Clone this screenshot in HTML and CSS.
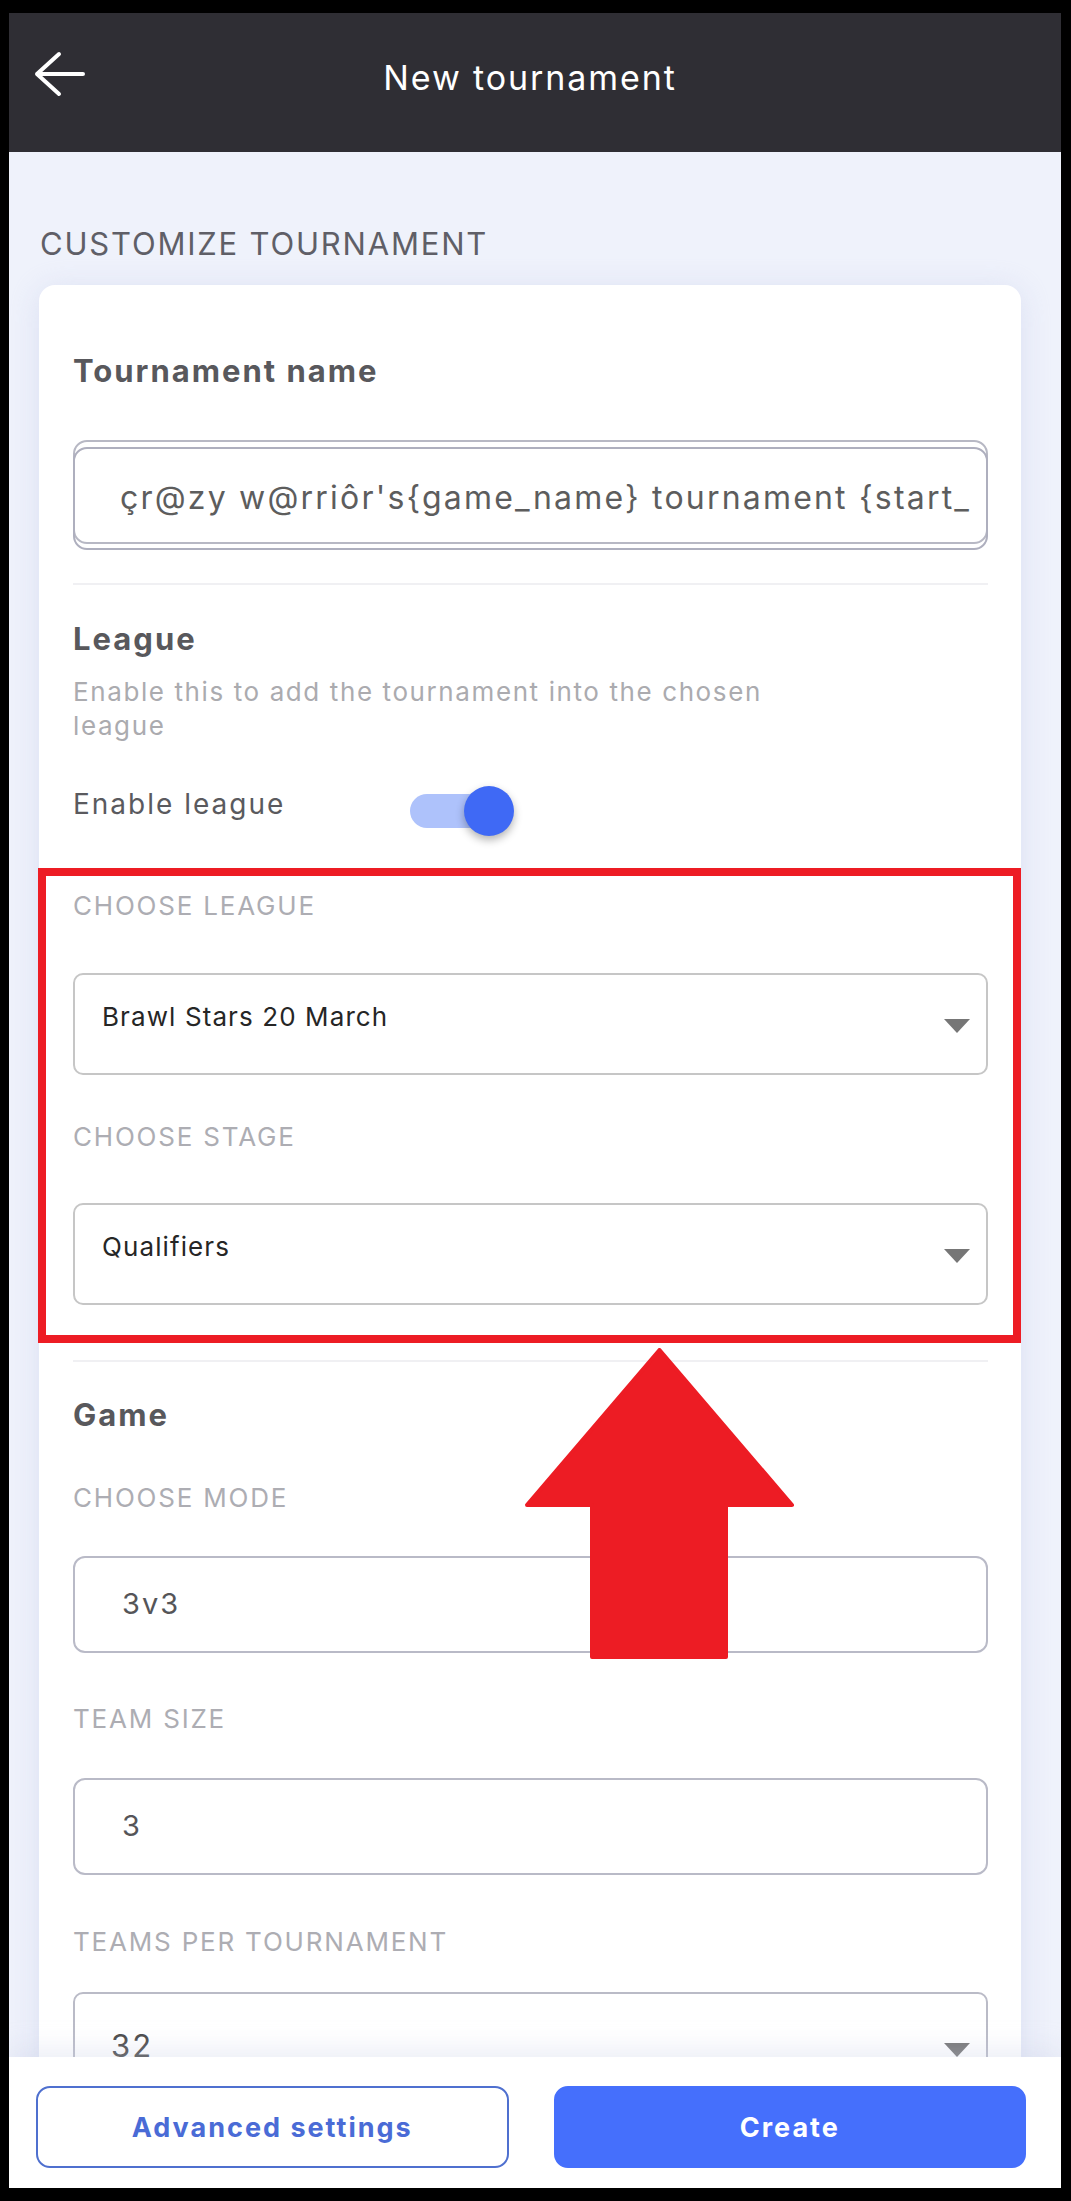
FILE: index.html
```html
<!DOCTYPE html>
<html lang="en">
<head>
<meta charset="utf-8">
<title>New tournament</title>
<link rel="stylesheet" href="styles.css">
</head>
<body>
<div class="phone">
  <header class="topbar">
    <svg class="back" width="54" height="48" viewBox="0 0 54 48" aria-hidden="true">
      <path d="M4 24 H50 M26 4 L4 24 L26 44" fill="none" stroke="#ffffff" stroke-width="4" stroke-linecap="round" stroke-linejoin="round"/>
    </svg>
    <h1 class="topbar-title">New tournament</h1>
  </header>

  <main class="content">
    <h2 class="caption">CUSTOMIZE TOURNAMENT</h2>
    <section class="card">
      <h3 class="card-title">Tournament name</h3>
      <div class="name-field"><span class="name-text">çr@zy w@rriôr's{game_name} tournament {start_</span></div>

      <div class="divider divider-1"></div>

      <h3 class="card-title title-league">League</h3>
      <p class="desc">Enable this to add the tournament into the chosen league</p>
      <div class="toggle-row">
        <span class="toggle-label">Enable league</span>
        <span class="toggle"><span class="toggle-track"></span><span class="toggle-knob"></span></span>
      </div>

      <div class="field-label label-league">Choose league</div>
      <div class="select select-league"><span class="select-text">Brawl Stars 20 March</span><span class="caret"></span></div>

      <div class="field-label label-stage">Choose stage</div>
      <div class="select select-stage"><span class="select-text">Qualifiers</span><span class="caret"></span></div>

      <div class="divider divider-2"></div>

      <h3 class="card-title title-game">Game</h3>
      <div class="field-label label-mode">Choose mode</div>
      <div class="input-box input-mode">3v3</div>

      <div class="field-label label-size">Team size</div>
      <div class="input-box input-size">3</div>

      <div class="field-label label-teams">Teams per tournament</div>
      <div class="select select-teams"><span class="select-text big">32</span><span class="caret caret-teams"></span></div>
    </section>
  </main>

  <div class="highlight"></div>
  <svg class="annot-arrow" width="269" height="311" viewBox="0 0 269 311" aria-hidden="true">
    <polygon points="134.5,2 267,157 201,157 201,309 67,309 67,157 2,157" fill="#ed1c24" stroke="#ed1c24" stroke-width="4" stroke-linejoin="round"/>
  </svg>

  <footer class="actions">
    <button class="btn btn-outline">Advanced settings</button>
    <button class="btn btn-primary">Create</button>
  </footer>
</div>
</body>
</html>
```

FILE: styles.css
```css
* { box-sizing: border-box; }

html, body {
  margin: 0;
  padding: 0;
  background: #000;
}

body {
  font-family: "Inter", "Noto Sans", sans-serif;
}

.phone {
  position: relative;
  width: 1052px;
  height: 2175px;
  margin: 13px 10px 13px 9px;
  background: #eff2fb;
  overflow: hidden;
}

/* Top bar */
.topbar {
  display: flex;
  align-items: flex-start;
  height: 139px;
  padding: 0 88px 0 24px;
  background: #2f2e34;
}

.back {
  display: block;
  margin-top: 37px;
  flex: 0 0 auto;
}

.topbar-title {
  flex: 1;
  margin: 45px 0 0;
  text-align: center;
  color: #ffffff;
  font-size: 34px;
  line-height: 40px;
  font-weight: 400;
  letter-spacing: 1.9px;
}

/* Content */
.content {
  padding: 73px 40px 0 30px;
}

.caption {
  margin: 0 0 22px 1px;
  font-size: 31px;
  line-height: 38px;
  font-weight: 400;
  color: #5f5f67;
  letter-spacing: 1.8px;
}

.card {
  background: #ffffff;
  border-radius: 16px;
  padding: 68px 33px 200px 34px;
  box-shadow: 0 4px 30px rgba(195, 202, 235, 0.45);
}

.card-title {
  margin: 0;
  font-size: 31px;
  line-height: 36px;
  font-weight: 700;
  color: #58585c;
  letter-spacing: 2px;
}

.name-field {
  position: relative;
  margin-top: 51px;
  height: 104px;
  border: 2px solid #b7b8c4;
  border-radius: 14px;
  padding: 36px 4px 0 45px;
  font-size: 32px;
  line-height: 40px;
  color: #5d5d5d;
  letter-spacing: 2.2px;
}

.name-field::after {
  content: "";
  position: absolute;
  left: -2px;
  right: -2px;
  top: 5px;
  bottom: -8px;
  border: 2px solid #aeafbe;
  border-radius: 14px;
  pointer-events: none;
}

.name-text {
  display: block;
  white-space: nowrap;
  overflow: hidden;
}

.divider {
  height: 2px;
  background: #f0f0f3;
}

.divider-1 { margin-top: 39px; }
.title-league { margin-top: 36px; }

.desc {
  margin: 18px 0 0;
  max-width: 740px;
  font-size: 26px;
  line-height: 34px;
  color: #ababaf;
  letter-spacing: 1.6px;
}

.toggle-row {
  display: flex;
  align-items: flex-start;
  height: 50px;
  margin-top: 43px;
}

.toggle-label {
  flex: 0 0 337px;
  font-size: 28px;
  line-height: 36px;
  color: #5a5a5e;
  letter-spacing: 2px;
}

.toggle {
  display: flex;
  align-items: center;
  height: 50px;
}

.toggle-track {
  width: 90px;
  height: 34px;
  border-radius: 17px;
  background: #aec2fb;
}

.toggle-knob {
  width: 50px;
  height: 50px;
  margin-left: -36px;
  border-radius: 50%;
  background: #3f69f5;
  box-shadow: 0 4px 9px rgba(0, 0, 0, 0.3);
}

.field-label {
  font-size: 26px;
  line-height: 32px;
  color: #adadb3;
  letter-spacing: 1.8px;
  text-transform: uppercase;
}

.label-league { margin-top: 54px; }
.label-stage { margin-top: 46px; }
.label-mode { margin-top: 49px; }
.label-size { margin-top: 50px; }
.label-teams { margin-top: 51px; }

.select {
  display: flex;
  justify-content: space-between;
  align-items: flex-start;
  height: 102px;
  border: 2px solid #c6c6c6;
  border-radius: 10px;
  padding: 26px 16px 0 27px;
}

.select-league { margin-top: 51px; }
.select-stage { margin-top: 50px; }
.select-teams {
  margin-top: 34px;
  border-color: #babbc7;
  padding: 33px 16px 0 36px;
}

.select-text {
  font-size: 26px;
  line-height: 32px;
  color: #262626;
  letter-spacing: 1.1px;
}

.select-text.big {
  font-size: 31px;
  line-height: 38px;
  color: #4a4a4a;
  letter-spacing: 2px;
}

.caret {
  width: 0;
  height: 0;
  margin-top: 18px;
  border-left: 13.5px solid transparent;
  border-right: 13.5px solid transparent;
  border-top: 14px solid #767676;
}

.caret-teams { margin-top: 16px; }

.divider-2 { margin-top: 55px; }
.title-game { margin-top: 35px; }

.input-box {
  height: 97px;
  border: 2px solid #b9bac7;
  border-radius: 12px;
  padding: 28px 0 0 47px;
  font-size: 29px;
  line-height: 36px;
  color: #555558;
  letter-spacing: 2px;
}

.input-mode { margin-top: 42px; }
.input-size { margin-top: 43px; }

/* Annotation overlays */
.highlight {
  position: absolute;
  left: 29px;
  top: 855px;
  width: 983px;
  height: 475px;
  border: 8px solid #ed1c24;
}

.annot-arrow {
  position: absolute;
  left: 516px;
  top: 1335px;
  display: block;
}

/* Bottom action bar */
.actions {
  position: absolute;
  left: 0;
  right: 0;
  bottom: 0;
  height: 131px;
  display: flex;
  gap: 45px;
  padding: 29px 35px 0 27px;
  background: #ffffff;
  box-shadow: 0 -8px 24px rgba(200, 205, 228, 0.35);
}

.btn {
  flex: 1;
  height: 82px;
  border-radius: 14px;
  font-family: "Inter", "Noto Sans", sans-serif;
  font-size: 27px;
  font-weight: 700;
  letter-spacing: 2px;
  cursor: pointer;
}

.btn-outline {
  background: #ffffff;
  border: 2px solid #4f70cf;
  color: #4a6bd6;
}

.btn-primary {
  background: #456ffc;
  border: 2px solid #456ffc;
  color: #ffffff;
}
```
